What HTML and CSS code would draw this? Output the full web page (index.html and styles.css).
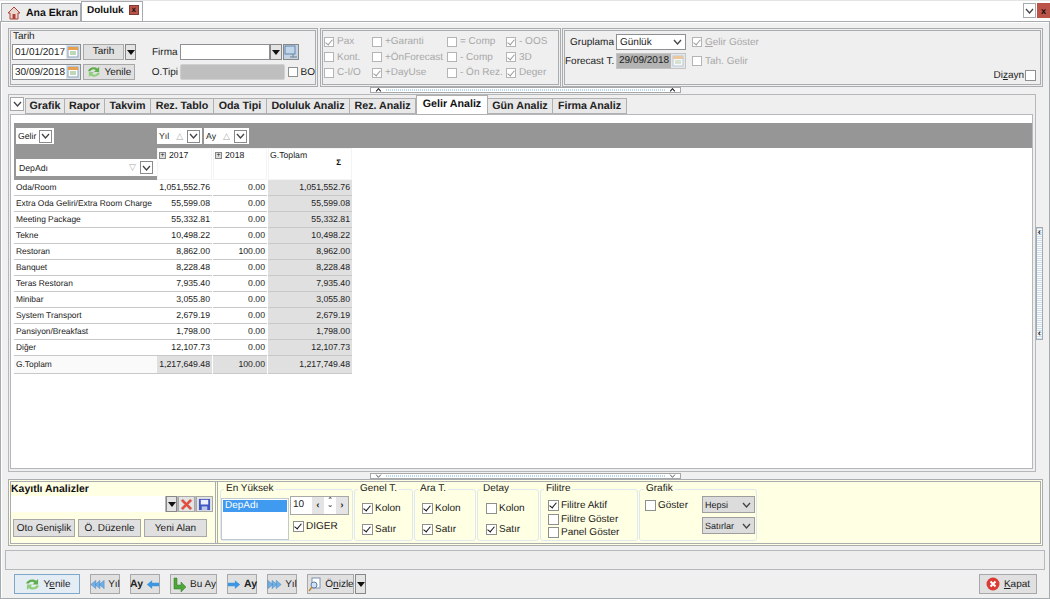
FILE: index.html
```html
<!DOCTYPE html>
<html lang="tr">
<head>
    <meta charset="UTF-8">
    <meta name="viewport" content="width=device-width, initial-scale=1.0">
    <title>Doluluk</title>
    <link rel="stylesheet" href="styles.css">
</head>
<body>
    <svg class="defs" width="0" height="0">
        <symbol id="i-cal" viewBox="0 0 12 12"><rect x="1" y="1" width="10" height="10" fill="#fff" stroke="#8aa4b8"/><rect x="1" y="1" width="10" height="3" fill="#e8a050"/><path d="M3 6h6M3 8h6" stroke="#7fb070"/></symbol>
        <symbol id="i-look" viewBox="0 0 14 14"><rect x="1" y="1" width="10" height="8" fill="#c2d6ea" stroke="#5f86ad"/><path d="M6 12h7M9 9v3" stroke="#6f7f8f"/></symbol>
        <symbol id="i-refresh" viewBox="0 0 18 14"><path d="M2 6C3 2 9 0 13 3l2-2v6h-6l2-2C9 3 6 4 5 6z" fill="#5fae4e"/><path d="M16 8c-1 4-7 6-11 3l-2 2V7h6L7 9c2 2 5 1 6-1z" fill="#8fcf7c"/></symbol>
        <symbol id="i-x" viewBox="0 0 14 14"><path d="M1 3l2-2 4 4 4-4 2 2-4 4 4 4-2 2-4-4-4 4-2-2 4-4z" fill="#e8483c" stroke="#b9b0a8" stroke-width=".6"/></symbol>
        <symbol id="i-disk" viewBox="0 0 14 14"><rect x="1" y="1" width="12" height="12" fill="#3f55c4"/><rect x="3" y="2" width="8" height="5" fill="#eef"/><rect x="4" y="9" width="6" height="4" fill="#b8c4e8"/></symbol>
        <symbol id="i-down" viewBox="0 0 9 6"><path d="M1 1l3.500 4L8 1" fill="none" stroke="#444" stroke-width="1.300"/></symbol>
        <symbol id="i-caret" viewBox="0 0 8 5"><path d="M0 0h8L4 5z" fill="#111"/></symbol>
        <symbol id="i-left" viewBox="0 0 16 12"><path d="M1 6l6-5v3h8v4H7v3z" fill="#3d97e0"/></symbol>
        <symbol id="i-right" viewBox="0 0 16 12"><path d="M15 6L9 1v3H1v4h8v3z" fill="#3d97e0"/></symbol>
        <symbol id="i-dleft" viewBox="0 0 18 12"><path d="M1 6l6-5v10zM6 6l6-5v10zM11 6l6-5v10z" fill="#6fb0e8" stroke="#4a7fb0" stroke-width=".5"/></symbol>
        <symbol id="i-dright" viewBox="0 0 18 12"><path d="M1 1l6 5-6 5zM6 1l6 5-6 5zM11 1l6 5-6 5z" fill="#6fb0e8" stroke="#4a7fb0" stroke-width=".5"/></symbol>
    </svg>

    <div class="tabbar">
        <div class="doc-tab">
            <svg class="home" width="14" height="14" viewBox="0 0 14 14"><path d="M7 1L1 7h2v6h8V7h2z" fill="#e8d8d0" stroke="#b04038"/><rect x="5.500" y="8" width="3" height="5" fill="#b04038"/></svg>
            <span>Ana Ekran</span>
        </div>
        <div class="doc-tab active">
            <span>Doluluk</span>
            <span class="close-box">x</span>
        </div>
        <div class="tabbar-right">
            <span class="win-btn"><svg width="9" height="6"><use href="#i-down"/></svg></span>
            <span class="win-close">x</span>
        </div>
    </div>

    <div class="main">
        <div class="top-panel">
            <div class="group group-date">
                <div class="group-title">Tarih</div>
                <div class="date-row">
                    <span class="date-input">01/01/2017<span class="cal"><svg width="12" height="12"><use href="#i-cal"/></svg></span></span>
                    <span class="btn btn-tarih">Tarih</span>
                    <span class="btn-drop"><svg width="8" height="5"><use href="#i-caret"/></svg></span>
                    <span class="lbl lbl-firma">Firma</span>
                    <span class="firma-input"></span>
                    <span class="btn-drop drop-firma"><svg width="8" height="5"><use href="#i-caret"/></svg></span>
                    <span class="btn-lookup"><svg width="14" height="14"><use href="#i-look"/></svg></span>
                </div>
                <div class="date-row">
                    <span class="date-input">30/09/2018<span class="cal"><svg width="12" height="12"><use href="#i-cal"/></svg></span></span>
                    <span class="btn btn-yenile"><svg width="16" height="12"><use href="#i-refresh"/></svg>Yenile</span>
                    <span class="lbl lbl-otipi">O.Tipi</span>
                    <span class="otipi-box"></span>
                    <span class="check"></span>
                    <span class="lbl">BO</span>
                </div>
            </div>

            <div class="group group-checks">
                <label class="opt off"><span class="check on"></span>Pax</label>
                <label class="opt off"><span class="check"></span>+Garanti</label>
                <label class="opt off"><span class="check"></span>= Comp</label>
                <label class="opt off"><span class="check on"></span>- OOS</label>
                <label class="opt off"><span class="check"></span>Kont.</label>
                <label class="opt off"><span class="check"></span>+ÖnForecast</label>
                <label class="opt off"><span class="check"></span>- Comp</label>
                <label class="opt off"><span class="check on"></span>3D</label>
                <label class="opt off"><span class="check"></span>C-I/O</label>
                <label class="opt off"><span class="check on"></span>+DayUse</label>
                <label class="opt off"><span class="check"></span>- Ön Rez.</label>
                <label class="opt off"><span class="check on"></span>Deger</label>
            </div>

            <div class="group group-group">
                <div class="group-row">
                    <span class="lbl lbl-right">Gruplama</span>
                    <span class="select-box">Günlük<svg width="9" height="6"><use href="#i-down"/></svg></span>
                    <label class="opt off"><span class="check on"></span><span><u>G</u>elir Göster</span></label>
                </div>
                <div class="group-row">
                    <span class="lbl lbl-right">Forecast T.</span>
                    <span class="forecast-box"><span class="forecast-val">29/09/2018</span><span class="cal faded"><svg width="12" height="12"><use href="#i-cal"/></svg></span></span>
                    <label class="opt off"><span class="check"></span>Tah. Gelir</label>
                </div>
                <label class="opt dizayn"><span>Di<u>z</u>ayn</span><span class="check"></span></label>
            </div>
        </div>

        <div class="splitter"><span class="grip"><svg width="7" height="4" viewBox="0 0 9 6"><path d="M1 5l3.500-4L8 5" fill="none" stroke="#222" stroke-width="1.600"/></svg><i></i><svg width="7" height="4" viewBox="0 0 9 6"><path d="M1 5l3.500-4L8 5" fill="none" stroke="#222" stroke-width="1.600"/></svg></span></div>

        <div class="middle">
            <div class="tab-panel">
                <div class="tab-strip">
                    <span class="tab-collapse"><svg width="9" height="6"><use href="#i-down"/></svg></span>
                    <span class="tab tab-grafik">Grafik</span>
                    <span class="tab tab-rapor">Rapor</span>
                    <span class="tab tab-takvim">Takvim</span>
                    <span class="tab tab-rez">Rez. Tablo</span>
                    <span class="tab tab-oda">Oda Tipi</span>
                    <span class="tab tab-dol">Doluluk Analiz</span>
                    <span class="tab tab-rezan">Rez. Analiz</span>
                    <span class="tab tab-active">Gelir Analiz</span>
                    <span class="tab tab-gun">Gün Analiz</span>
                    <span class="tab tab-firma">Firma Analiz</span>
                </div>
                <div class="tab-body">
                    <div class="pivot">
                        <div class="pivot-head">
                            <div class="pivot-fields">
                                <span class="field field-gelir">Gelir<span class="drop-mini"><svg width="9" height="6"><use href="#i-down"/></svg></span></span>
                                <span class="field field-dep">DepAdı<span class="sort-tri">▽</span><span class="drop-mini"><svg width="9" height="6"><use href="#i-down"/></svg></span></span>
                            </div>
                            <div class="pivot-cols">
                                <div class="col-fields">
                                    <span class="field">Yıl<span class="sort-tri">△</span><span class="drop-mini"><svg width="9" height="6"><use href="#i-down"/></svg></span></span>
                                    <span class="field">Ay<span class="sort-tri">△</span><span class="drop-mini"><svg width="9" height="6"><use href="#i-down"/></svg></span></span>
                                </div>
                                <div class="col-heads">
                                    <span class="col-head c1"><span class="plus">+</span>2017</span>
                                    <span class="col-head c2"><span class="plus">+</span>2018</span>
                                    <span class="col-head c3">G.Toplam<span class="sigma">Σ</span></span>
                                </div>
                            </div>
                        </div>
                        <div class="pivot-row"><span class="r">Oda/Room</span><span class="v">1,051,552.76</span><span class="v">0.00</span><span class="v t">1,051,552.76</span></div>
                        <div class="pivot-row"><span class="r">Extra Oda Geliri/Extra Room Charge</span><span class="v">55,599.08</span><span class="v">0.00</span><span class="v t">55,599.08</span></div>
                        <div class="pivot-row"><span class="r">Meeting Package</span><span class="v">55,332.81</span><span class="v">0.00</span><span class="v t">55,332.81</span></div>
                        <div class="pivot-row"><span class="r">Tekne</span><span class="v">10,498.22</span><span class="v">0.00</span><span class="v t">10,498.22</span></div>
                        <div class="pivot-row"><span class="r">Restoran</span><span class="v">8,862.00</span><span class="v">100.00</span><span class="v t">8,962.00</span></div>
                        <div class="pivot-row"><span class="r">Banquet</span><span class="v">8,228.48</span><span class="v">0.00</span><span class="v t">8,228.48</span></div>
                        <div class="pivot-row"><span class="r">Teras Restoran</span><span class="v">7,935.40</span><span class="v">0.00</span><span class="v t">7,935.40</span></div>
                        <div class="pivot-row"><span class="r">Minibar</span><span class="v">3,055.80</span><span class="v">0.00</span><span class="v t">3,055.80</span></div>
                        <div class="pivot-row"><span class="r">System Transport</span><span class="v">2,679.19</span><span class="v">0.00</span><span class="v t">2,679.19</span></div>
                        <div class="pivot-row"><span class="r">Pansiyon/Breakfast</span><span class="v">1,798.00</span><span class="v">0.00</span><span class="v t">1,798.00</span></div>
                        <div class="pivot-row"><span class="r">Diğer</span><span class="v">12,107.73</span><span class="v">0.00</span><span class="v t">12,107.73</span></div>
                        <div class="pivot-row total"><span class="r">G.Toplam</span><span class="v t">1,217,649.48</span><span class="v t">100.00</span><span class="v t">1,217,749.48</span></div>
                    </div>
                </div>
            </div>
            <div class="side-grip"><span class="side-grip-in"><b>‹</b><b>‹</b></span></div>
        </div>

        <div class="splitter splitter-low"><span class="grip"><svg width="7" height="4"><use href="#i-down"/></svg><i></i><svg width="7" height="4"><use href="#i-down"/></svg></span></div>

        <div class="bottom-panel">
            <div class="saved">
                <div class="saved-title">Kayıtlı Analizler</div>
                <div class="saved-row">
                    <span class="saved-input"></span>
                    <span class="btn-drop"><svg width="8" height="5"><use href="#i-caret"/></svg></span>
                    <span class="icon-btn"><svg width="13" height="13"><use href="#i-x"/></svg></span>
                    <span class="icon-btn"><svg width="13" height="13"><use href="#i-disk"/></svg></span>
                </div>
                <div class="saved-btns">
                    <span class="btn w-oto">Oto Genişlik</span>
                    <span class="btn w-duz">Ö. Düzenle</span>
                    <span class="btn w-yeni">Yeni Alan</span>
                </div>
            </div>

            <fieldset class="fs fs-top">
                <legend>En Yüksek</legend>
                <div class="top-list"><span class="top-item">DepAdı</span></div>
                <div class="top-side">
                    <div class="spin"><span class="spin-val">10</span><span class="spin-btn">‹</span><span class="spin-mid"><b>ˆ</b><b>ˇ</b></span><span class="spin-btn">›</span></div>
                    <label class="opt"><span class="check on dark"></span>DIGER</label>
                </div>
            </fieldset>

            <fieldset class="fs fs-genel">
                <legend>Genel T.</legend>
                <label class="opt"><span class="check on dark"></span>Kolon</label>
                <label class="opt"><span class="check on dark"></span>Satır</label>
            </fieldset>
            <fieldset class="fs fs-ara">
                <legend>Ara T.</legend>
                <label class="opt"><span class="check on dark"></span>Kolon</label>
                <label class="opt"><span class="check on dark"></span>Satır</label>
            </fieldset>
            <fieldset class="fs fs-detay">
                <legend>Detay</legend>
                <label class="opt"><span class="check"></span>Kolon</label>
                <label class="opt"><span class="check on dark"></span>Satır</label>
            </fieldset>
            <fieldset class="fs fs-filtre">
                <legend>Filitre</legend>
                <label class="opt"><span class="check on dark"></span>Filitre Aktif</label>
                <label class="opt"><span class="check"></span>Filitre Göster</label>
                <label class="opt"><span class="check"></span>Panel Göster</label>
            </fieldset>
            <fieldset class="fs fs-grafik">
                <legend>Grafik</legend>
                <label class="opt"><span class="check"></span>Göster</label>
                <div class="grafik-sel">
                    <span class="mini-sel">Hepsi<svg width="9" height="6"><use href="#i-down"/></svg></span>
                    <span class="mini-sel">Satırlar<svg width="9" height="6"><use href="#i-down"/></svg></span>
                </div>
            </fieldset>
        </div>

        <div class="status-bar"></div>

        <div class="button-row">
            <span class="btn act act-yenile"><svg width="17" height="13"><use href="#i-refresh"/></svg><span>Y<u>e</u>nile</span></span>
            <span class="btn act w30"><svg width="15" height="11"><use href="#i-dleft"/></svg>Yıl</span>
            <span class="btn act w30 bold">Ay<svg width="14" height="11"><use href="#i-left"/></svg></span>
            <span class="btn act w47">
                <svg width="16" height="15" viewBox="0 0 16 15"><path d="M3 1h3v7h4V5l5 5-5 5v-3H3z" fill="#4ea53a" stroke="#2f7a25" stroke-width=".5"/></svg>Bu Ay
            </span>
            <span class="btn act w30 bold"><svg width="14" height="11"><use href="#i-right"/></svg>Ay</span>
            <span class="btn act w30"><svg width="15" height="11"><use href="#i-dright"/></svg>Yıl</span>
            <span class="btn act w47">
                <svg width="15" height="15" viewBox="0 0 15 15"><rect x="5" y="1" width="8" height="10" fill="#fff" stroke="#7c8fb0"/><circle cx="7" cy="8" r="3" fill="#cfe2f5" stroke="#5e7fa8"/><path d="M5 10l-3 4" stroke="#c28a3a" stroke-width="1.600"/></svg><span>Ö<u>n</u>izle</span>
            </span>
            <span class="btn-drop drop-onizle"><svg width="8" height="5"><use href="#i-caret"/></svg></span>
            <span class="btn act act-kapat">
                <svg width="14" height="14" viewBox="0 0 14 14"><circle cx="7" cy="7" r="6.500" fill="#dc3b34"/><path d="M4.500 4.500l5 5M9.500 4.500l-5 5" stroke="#fff" stroke-width="2"/></svg><span><u>K</u>apat</span>
            </span>
        </div>
    </div>
</body>
</html>
```

FILE: styles.css
```css
* {
    box-sizing: border-box;
}
html, body {
    margin: 0;
    padding: 0;
}
body {
    width: 1050px;
    height: 599px;
    overflow: hidden;
    background: #fff;
    font-family: "Liberation Sans", Arial, sans-serif;
    font-size: 10px;
    color: #222;
    text-rendering: geometricPrecision;
}
.defs {
    display: block;
    height: 0;
}
svg {
    flex: none;
}

/* tab bar */
.tabbar {
    display: flex;
    height: 21px;
    padding-top: 1px;
    border-top: 1px solid #e4e4e4;
    align-items: flex-end;
}
.doc-tab {
    display: flex;
    align-items: center;
    width: 80px;
    height: 18px;
    margin-left: 1px;
    padding-left: 5px;
    gap: 5px;
    background: #ececec;
    border: 1px solid #a6abb0;
    border-bottom: 0;
    font-size: 10.500px;
    font-weight: bold;
    color: #111;
    white-space: nowrap;
}
.doc-tab.active {
    width: 62px;
    height: 20px;
    margin-left: 0;
    padding-left: 5px;
    background: #fff;
    padding-bottom: 3px;
    font-size: 10px;
}
.close-box {
    display: flex;
    width: 10px;
    height: 10px;
    margin-left: 0;
    align-items: center;
    justify-content: center;
    background: #bb5349;
    border: 1px solid #7e3a33;
    color: #111;
    font-size: 8px;
    line-height: 1;
}
.tabbar-right {
    display: flex;
    align-self: flex-start;
    margin-left: auto;
    gap: 1px;
    height: 15px;
    margin-top: 1px;
}
.win-btn {
    display: flex;
    width: 13px;
    align-items: center;
    justify-content: center;
    border: 1px solid #a6abb0;
    background: #fff;
}
.win-close {
    display: flex;
    width: 13px;
    align-items: center;
    justify-content: center;
    background: #bb5349;
    font-weight: bold;
    font-size: 9px;
    color: #111;
}

/* main */
.main {
    height: 578px;
    border: 1px solid #a6abb0;
    box-shadow: inset 0 1px 0 #fff, inset 1px 0 0 #fff;
    padding: 6px 4px 0 4px;
    background: #f0f0f0;
}
.top-panel {
    display: flex;
    height: 59px;
    margin: 0 2px 0 3px;
    gap: 2px;
}
.group {
    height: 59px;
    border: 3px double #a9adb0;
    background: #efefef;
}
.group-date {
    width: 310px;
    padding: 0 0 0 1px;
}
.group-title {
    height: 13px;
    padding-left: 1px;
    line-height: 11px;
}
.date-row {
    display: flex;
    align-items: center;
    height: 16px;
    margin-bottom: 4px;
}
.date-input {
    display: flex;
    align-items: center;
    justify-content: space-between;
    width: 69px;
    height: 16px;
    padding-left: 2px;
    background: #fff;
    border: 1px solid #8c9094;
}
.cal {
    display: flex;
    align-items: center;
    justify-content: center;
    width: 14px;
    height: 14px;
    background: #dbe3ea;
}
.cal.faded {
    opacity: .5;
}
.btn {
    display: flex;
    align-items: center;
    justify-content: center;
    height: 16px;
    background: #e0e0e0;
    border: 1px solid #a8a8a8;
    color: #222;
}
.btn-tarih {
    width: 41px;
    margin-left: 2px;
    padding-bottom: 2px;
}
.btn-yenile {
    width: 52px;
    margin-left: 2px;
    gap: 2px;
}
.btn-drop {
    display: flex;
    align-items: center;
    justify-content: center;
    width: 11px;
    height: 16px;
    margin-left: 1px;
    background: #e4e4e4;
    border: 1px solid #888;
}
.lbl {
    white-space: nowrap;
}
.lbl-firma {
    margin-left: 16px;
    width: 28px;
}
.lbl-otipi {
    margin-left: 17px;
    width: 28px;
}
.firma-input {
    width: 90px;
    height: 16px;
    background: #fff;
    border: 1px solid #8c9094;
}
.drop-firma {
    margin-left: 0;
    width: 12px;
}
.btn-lookup {
    display: flex;
    align-items: center;
    justify-content: center;
    width: 16px;
    height: 16px;
    margin-left: 1px;
    background: #c6d4e2;
    border: 1px solid #888;
}
.otipi-box {
    width: 105px;
    height: 16px;
    background: #bfbfbf;
    border: 1px solid #d0d0d0;
    border-radius: 2px;
}
.otipi-box + .check {
    margin: 0 3px 0 3px;
}

/* checkbox */
.check {
    position: relative;
    display: inline-block;
    flex: none;
    width: 10px;
    height: 10px;
    background: #fff;
    border: 1px solid #8e8f8f;
}
.check.on::after {
    content: "";
    position: absolute;
    left: 2px;
    top: 0;
    width: 3px;
    height: 6px;
    border: solid #9a9a9a;
    border-width: 0 1.500px 1.500px 0;
    transform: rotate(40deg);
}
.check.on.dark::after {
    border-color: #111;
}
.opt {
    display: flex;
    align-items: center;
    gap: 3px;
    white-space: nowrap;
}
.opt.off {
    color: #a8a8a8;
}
.opt.off .check {
    border-color: #b4b4b4;
}

/* middle group */
.group-checks {
    display: grid;
    grid-template-columns: 48px 75px 59px 1fr;
    grid-auto-rows: 15.500px;
    width: 241px;
    padding: 3px 0 0 1px;
    align-items: center;
}

/* right group */
.group-group {
    flex: 1;
    margin-left: -1px;
    padding: 3px 4px 0 0;
    display: flex;
    flex-direction: column;
}
.group-row {
    display: flex;
    align-items: center;
    height: 16px;
    margin-bottom: 3px;
}
.lbl-right {
    width: 49px;
    text-align: right;
    margin-right: 2px;
}
.select-box {
    display: flex;
    align-items: center;
    justify-content: space-between;
    width: 70px;
    height: 16px;
    padding: 0 3px;
    background: #fff;
    border: 1px solid #8c9094;
    margin-right: 6px;
}
.forecast-box {
    display: flex;
    align-items: center;
    width: 70px;
    height: 16px;
    border: 1px solid #c4c4c4;
    margin-right: 6px;
}
.forecast-val {
    width: 54px;
    padding-left: 2px;
    height: 14px;
    line-height: 14px;
    background: #b4b4b4;
}
.dizayn {
    margin-top: -2px;
    align-self: flex-end;
    gap: 1px;
}
.dizayn .check {
    width: 11px;
    height: 11px;
}

/* splitter */
.splitter {
    display: flex;
    justify-content: center;
    height: 7px;
    padding-right: 2px;
    margin-right: 3px;
}
.grip {
    display: flex;
    align-items: center;
    justify-content: space-between;
    width: 311px;
    height: 6px;
    margin-left: 6px;
    padding: 0 4px;
    background: #fff;
    border: 1px solid #a8a8a8;
}
.grip i {
    flex: 1;
    height: 2px;
    margin: 0 4px;
    background: repeating-linear-gradient(90deg, #b9d6ef 0 1px, #fff 1px 2px);
}

/* tabs */
.middle {
    display: flex;
    height: 378px;
    margin-left: 3px;
}
.tab-panel {
    width: 1028px;
    height: 378px;
    background: #efefef;
    border: 1px solid #b5b8bb;
    padding: 1px 2px 2px 1px;
    display: flex;
    flex-direction: column;
}
.tab-strip {
    display: flex;
    align-items: flex-end;
    height: 18px;
}
.tab-collapse {
    display: flex;
    align-items: center;
    justify-content: center;
    width: 14px;
    height: 14px;
    align-self: flex-start;
    margin-top: 1px;
    background: #fff;
    border: 1px solid #a8a8a8;
}
.tab {
    display: flex;
    align-items: center;
    justify-content: center;
    height: 16px;
    background: #e8e8e8;
    border: 1px solid #b0b0b0;
    border-left-width: 0;
    font-size: 10.700px;
    font-weight: bold;
    color: #222;
}
.tab-grafik { width: 40px; border-left-width: 1px; margin-left: 1px; }
.tab-rapor { width: 40px; }
.tab-takvim { width: 46px; }
.tab-rez { width: 63px; }
.tab-oda { width: 53px; }
.tab-dol { width: 83px; }
.tab-rezan { width: 66px; }
.tab-gun { width: 65px; }
.tab-firma { width: 74px; }
.tab-active {
    width: 72px;
    height: 20px;
    margin-bottom: -1px;
    padding-bottom: 2px;
    background: #fff;
    position: relative;
    z-index: 1;
    border-left-width: 1px;
    color: #111;
}
.tab-body {
    flex: 1;
    background: #fff;
    border: 1px solid #b5b8bb;
    padding: 8px 0 0 3px;
}

/* pivot */
.pivot {
    width: 100%;
    font-size: 8.700px;
}
.pivot-head {
    display: flex;
    height: 57px;
}
.pivot-fields {
    width: 143px;
    background: #969696;
    padding: 5px 1px 0 2px;
    display: flex;
    flex-direction: column;
    align-items: flex-start;
    height: 57px;
}
.pivot-cols {
    flex: 1;
}
.col-fields {
    display: flex;
    gap: 2px;
    height: 25px;
    background: #969696;
    padding: 5px 0 0 0;
}
.col-heads {
    display: flex;
    height: 32px;
    gap: 1px;
}
.field {
    display: flex;
    align-items: center;
    height: 16px;
    padding: 0 2px 0 2px;
    background: #fff;
    border: 0;
}
.field-gelir {
    gap: 3px;
}
.field-dep {
    width: 141px;
    height: 17px;
    margin-top: 15px;
    padding: 0 4px 0 3px;
}
.field-dep .sort-tri {
    margin-left: auto;
}
.sort-tri {
    margin: 0 4px 0 7px;
    font-size: 9px;
    color: #aaa;
}
.field-dep .sort-tri {
    margin-right: 4px;
}
.drop-mini {
    display: flex;
    align-items: center;
    justify-content: center;
    width: 13px;
    height: 13px;
    background: #fff;
    border: 1px solid #8a8a8a;
}
.col-head {
    display: block;
    position: relative;
    padding: 1px 0 0 2px;
    background: #fff;
    box-shadow: inset 0 0 0 1px #f4f4f4;
    line-height: 12px;
}
.c1 { width: 55px; }
.c2 { width: 54px; }
.c3 { width: 84px; }
.plus {
    display: inline-flex;
    width: 7px;
    height: 7px;
    margin-right: 3px;
    align-items: center;
    justify-content: center;
    background: #ddd;
    border: 1px solid #888;
    font-size: 7px;
    line-height: 1;
    vertical-align: 1px;
}
.sigma {
    position: absolute;
    right: 11px;
    top: 9px;
    font-size: 8px;
    font-weight: bold;
    color: #111;
}
.pivot-row {
    display: grid;
    grid-template-columns: 143px 55px 1px 54px 1px 84px;
    height: 16px;
    line-height: 15px;
}
.pivot-row .r {
    grid-column: 1;
    padding-left: 2px;
    border-bottom: 1px solid #c8c8c8;
    background: #fff;
    white-space: nowrap;
    font-size: 8.400px;
}
.pivot-row .v {
    padding-right: 2px;
    text-align: right;
    border-bottom: 1px solid #c8c8c8;
    background: #fff;
}
.pivot-row .v:nth-child(2) { grid-column: 2; }
.pivot-row .v:nth-child(3) { grid-column: 4; }
.pivot-row .v:nth-child(4) { grid-column: 6; }
.pivot-row .t {
    background: #e0e0e0;
}
.total {
    line-height: 17px;
}
.total .r {
    background: #fafafa;
}

/* bottom */
.splitter-low {
    height: 7px;
    padding-top: 1px;
}
.bottom-panel {
    display: flex;
    height: 67px;
    margin: 0 2px 0 3px;
    background: #ffffe3;
    border: 3px double #a9adb0;
    padding-right: 2px;
}
.saved {
    width: 204px;
    margin-right: 2px;
    padding-top: 2px;
    border-right: 3px double #a9adb0;
    flex: none;
    box-sizing: content-box;
}
.saved-title {
    height: 12px;
    font-size: 10.500px;
    font-weight: bold;
    line-height: 11px;
    color: #111;
}
.saved-row {
    display: flex;
    align-items: center;
    width: 202px;
    height: 16px;
    background: #b6b6b6;
    gap: 1px;
}
.saved-input {
    width: 154px;
    height: 16px;
    background: #fff;
}
.saved-row .btn-drop {
    margin: 0;
}
.icon-btn {
    display: flex;
    align-items: center;
    justify-content: center;
    width: 17px;
    height: 16px;
    background: #e4e4e4;
    border: 1px solid #a8a8a8;
}
.saved-btns {
    display: flex;
    gap: 3px;
    margin-top: 7px;
    padding-left: 2px;
}
.saved-btns .btn {
    height: 18px;
}
.w-oto { width: 62px; }
.w-duz { width: 63px; }
.w-yeni { width: 63px; }
.fs {
    flex: none;
    margin: 1px 1px 0 0;
    padding: 0;
    height: 58px;
    border: 1px solid #dfe8ee;
    border-radius: 3px;
}
.fs legend {
    margin-left: -4px;
    padding: 0 2px;
    line-height: 12px;
    white-space: nowrap;
}
.fs-top {
    display: flex;
    width: 133px;
    padding: 0 0 0 0;
    gap: 1px;
}
.fs-top legend {
    margin-left: 3px;
}
.top-list {
    width: 68px;
    height: 42px;
    margin-top: 3px;
    background: #fff;
    border: 1px solid #c0c8d0;
    padding: 1px;
}
.top-item {
    display: block;
    height: 12px;
    padding-left: 2px;
    line-height: 12px;
    background: #3f9af0;
    color: #fff;
}
.top-side {
    margin-top: 1px;
}
.spin {
    display: flex;
    align-items: center;
    width: 59px;
    height: 19px;
    border: 1px solid #a8a8a8;
    background: #e4e4e4;
}
.spin-val {
    width: 21px;
    height: 17px;
    padding-left: 2px;
    line-height: 16px;
    background: #fff;
}
.spin-btn {
    width: 12px;
    text-align: center;
    font-weight: bold;
    line-height: 14px;
}
.spin-mid {
    display: flex;
    flex-direction: column;
    width: 12px;
    height: 17px;
    text-align: center;
    background: #fff;
    font-size: 9px;
    line-height: 8px;
}
.top-side .opt {
    margin: 6px 0 0 3px;
    gap: 2px;
}
.fs-genel, .fs-ara, .fs-detay {
    display: flex;
    flex-direction: column;
    gap: 10px;
    padding: 8px 0 0 7px;
    width: 59px;
}
.fs-genel .opt, .fs-ara .opt, .fs-detay .opt {
    gap: 2px;
}
.fs-ara { width: 62px; }
.fs-detay { width: 62px; padding-left: 8px; }
.fs-detay legend {
    margin-left: -5px;
}
.fs-filtre {
    width: 98px;
    padding: 5px 0 0 7px;
    display: flex;
    flex-direction: column;
    gap: 2.500px;
}
.fs-filtre .opt {
    gap: 2px;
}
.fs-grafik {
    display: flex;
    width: 118px;
    padding: 1px 0 0 5px;
    gap: 13px;
}
.fs-grafik legend {
    margin-left: -1px;
}
.fs-grafik .opt {
    align-self: flex-start;
    margin-top: 4px;
    gap: 2px;
}
.grafik-sel {
    display: flex;
    flex-direction: column;
    gap: 4px;
    margin-left: 1px;
}
.mini-sel {
    display: flex;
    align-items: center;
    justify-content: space-between;
    width: 53px;
    height: 17px;
    padding: 0 3px 0 2px;
    background: #dcdcdc;
    border: 1px solid #9e9e9e;
    font-size: 9px;
}
.check.on.dark, .fs .check {
    width: 11px;
    height: 11px;
}

.status-bar {
    height: 20px;
    margin: 4px 0 0 0;
    background: #eeeeee;
    border: 1px solid #b6b9bc;
}
.button-row {
    display: flex;
    align-items: flex-start;
    gap: 10px;
    padding: 4px 8px 0 9px;
    height: 28px;
}
.act {
    height: 20px;
    gap: 3px;
    white-space: nowrap;
}
.act-yenile {
    width: 66px;
    background: #e4ecf4;
    border-color: #7fa8cc;
}
.w30 { width: 30px; }
.w47 { width: 47px; }
.bold { font-weight: bold; font-size: 10.500px; }
.drop-onizle {
    width: 11px;
    height: 20px;
    margin-left: -9px;
}
.act-kapat {
    width: 58px;
    margin-left: auto;
    gap: 4px;
    margin-right: 0;
}
.side-grip {
    display: flex;
    align-items: center;
    width: 7px;
    margin-left: 0;
}
.side-grip-in {
    display: flex;
    flex-direction: column;
    justify-content: space-between;
    width: 7px;
    height: 113px;
    background: repeating-linear-gradient(0deg, #c8def2 0 1px, #fff 1px 2px);
    border: 1px solid #a8a8a8;
    line-height: 10px;
    font-size: 10px;
    text-align: center;
}
```
